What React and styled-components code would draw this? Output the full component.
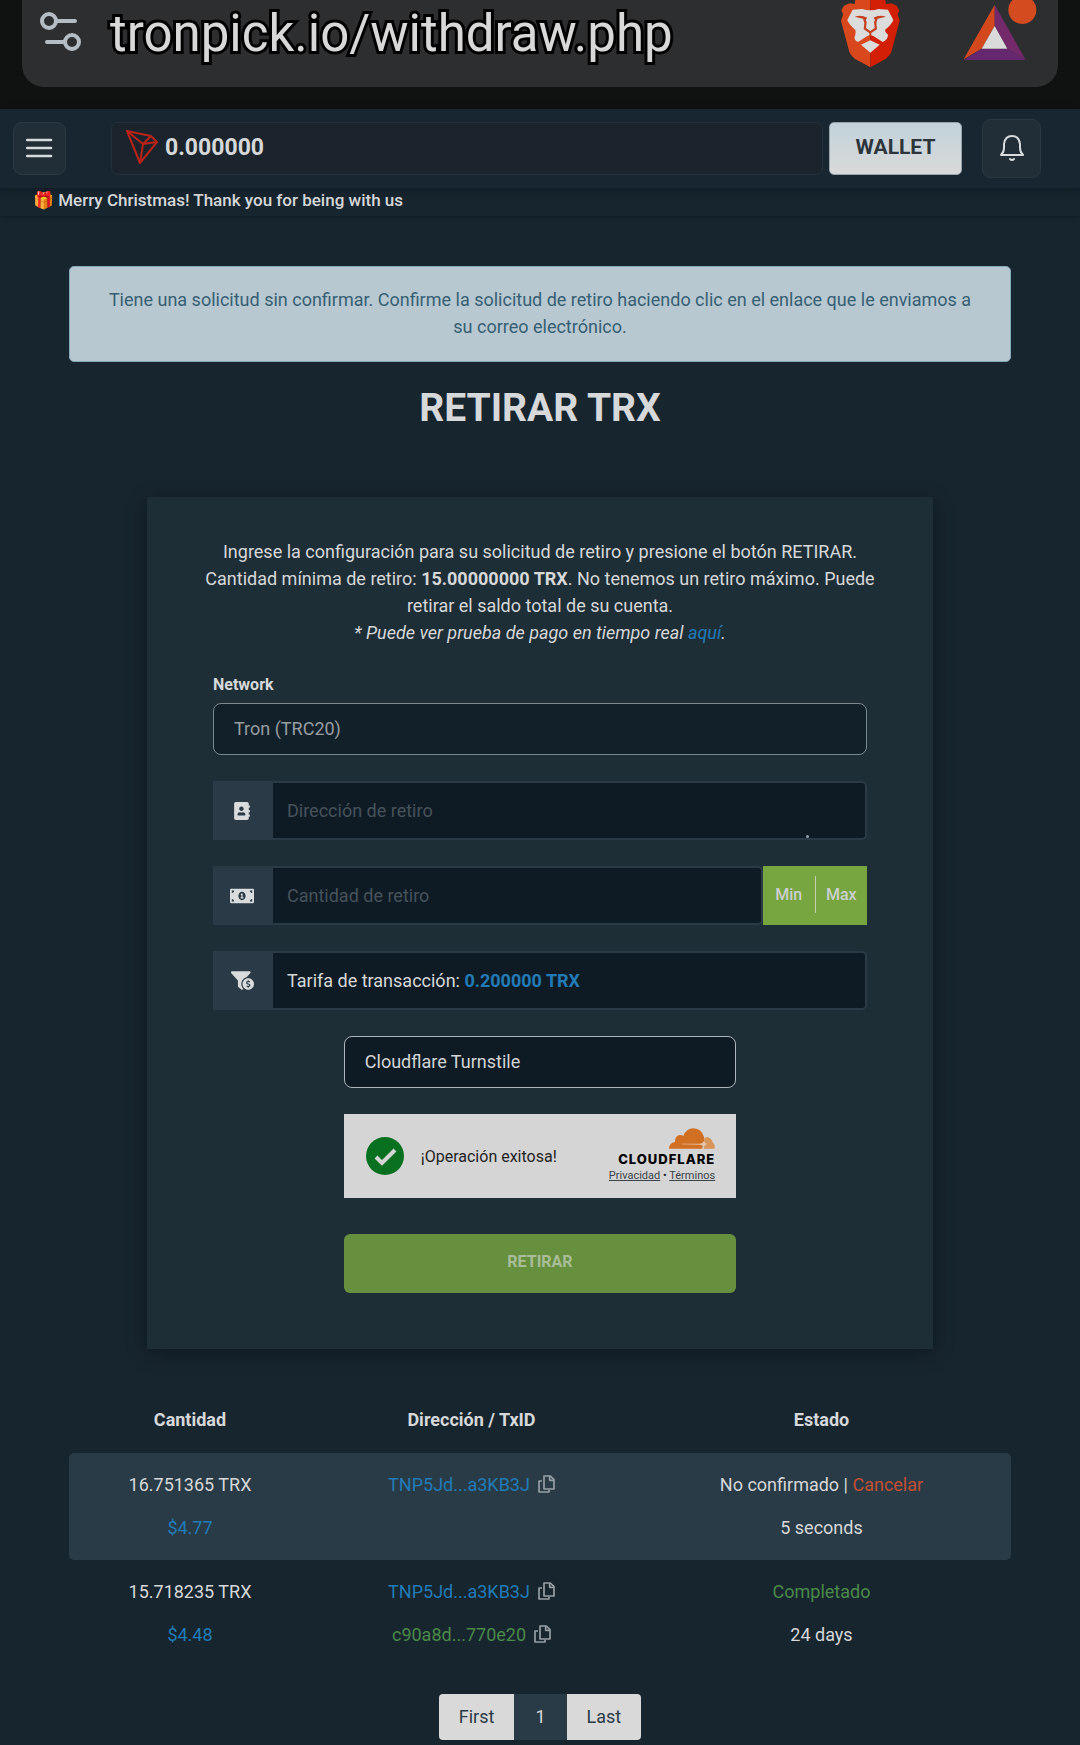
/**
 * External Dependencies
 */
import { useState } from 'react'
import styled, { createGlobalStyle } from 'styled-components'
import { FaAddressBook, FaMoneyBillAlt, FaFunnelDollar } from 'react-icons/fa'

const GlobalStyle = createGlobalStyle`
    *, *::before, *::after {
        box-sizing: border-box;
    }
    body {
        margin: 0;
        background: #17252f;
        color: #d6d8d9;
        font-family: Roboto, "Liberation Sans", sans-serif;
        font-size: 18px;
        line-height: 27px;
    }
    button, input, select, textarea {
        font: inherit;
        color: inherit;
    }
    a {
        text-decoration: none;
    }
`

/**
 * Browser bar
 */
const BrowserBar = styled.div`
    height: 109px;
    padding: 0 22px 22px;
    background: #0f1210;
`

const AddressBar = styled.div`
    display: flex;
    align-items: flex-start;
    height: 87px;
    padding: 0 19px 0 18px;
    border-radius: 0 0 22px 22px;
    background: #2d2e30;
`

const Url = styled.span`
    flex: 1;
    margin-left: 28px;
    font-size: 51px;
    line-height: 68px;
    color: #d8d8d8;
    -webkit-text-stroke: 6px #000;
    paint-order: stroke fill;
    stroke-linejoin: round;
`

const SettingsIcon = styled.svg`
    margin-top: 11px;
`

const BatIcon = styled.svg`
    margin-left: 63px;
`

/**
 * Site header
 */
const Header = styled.header`
    position: relative;
    display: flex;
    align-items: center;
    height: 79px;
    padding: 0 39px 1px 13px;
    background: #182631;
    box-shadow: 0 2px 8px rgba(0, 0, 0, .3);
`

const IconButton = styled.button`
    display: flex;
    align-items: center;
    justify-content: center;
    width: ${props => props.$size}px;
    height: ${props => props.$size}px;
    padding: 0;
    border: 1px solid #2b3942;
    border-radius: 9px;
    background: #212e37;
    color: #d8dadb;
`

const Balance = styled.div`
    display: flex;
    flex: 1;
    align-items: center;
    gap: 7px;
    height: 53px;
    margin: 0 6px 0 45px;
    padding: 0 14px 2px;
    border: 1px solid #22313b;
    border-radius: 7px;
    background: #1b242c;
    font-size: 23px;
    font-weight: 700;
`

const WalletButton = styled.button`
    width: 133px;
    height: 53px;
    margin-right: 20px;
    padding: 0 0 2px;
    border: 1px solid #98a5ad;
    border-radius: 5px;
    background: linear-gradient(#c2d2db, #d9d9d9);
    font-size: 21px;
    font-weight: 700;
    color: #2c343c;
`

const Announcement = styled.div`
    height: 28px;
    padding-left: 33px;
    box-shadow: 0 1px 4px rgba(0, 0, 0, .25);
    font-size: 17px;
    font-weight: 500;
    line-height: 24px;
`

/**
 * Page content
 */
const Main = styled.main`
    padding: 50px 69px 5px;
`

const Alert = styled.div`
    padding: 19px 28px 21px;
    border: 1px solid #84a9b8;
    border-radius: 5px;
    background: #b8c8d0;
    color: #365f74;
    text-align: center;
`

const Title = styled.h1`
    margin: 22px 0 65px;
    font-size: 39px;
    line-height: 48px;
    text-align: center;
`

const Card = styled.section`
    max-width: 786px;
    margin: 0 auto 39px;
    padding: 41px 47px 56px;
    background: #1e2e37;
    box-shadow: 0 4px 18px rgba(0, 0, 0, .35);
`

const Intro = styled.p`
    margin: 0 0 27px;
    text-align: center;
`

const InfoLink = styled.a`
    color: #227bb6;
`

const Form = styled.form`
    display: flex;
    flex-direction: column;
    gap: 26px;
    max-width: 654px;
    margin: 0 auto;
`

const Field = styled.div`
    display: flex;
    flex-direction: column;
    gap: 6px;
`

const Label = styled.label`
    font-size: 16px;
    font-weight: 700;
    line-height: 24px;
`

const Select = styled.select`
    appearance: none;
    width: 100%;
    height: 52px;
    padding: 0 20px 2px;
    border: 1px solid ${props => props.$muted ? '#7f888d' : '#b0b5b8'};
    border-radius: 8px;
    background: ${props => props.$muted ? '#12202a' : '#0e1b25'};
    color: ${props => props.$muted ? '#979da1' : '#d3d5d6'};
    opacity: 1;
`

const InputGroup = styled.div`
    position: relative;
    display: flex;
    height: 59px;
`

const Addon = styled.label`
    display: flex;
    flex: none;
    align-items: center;
    justify-content: center;
    width: 58px;
    background: #2a3a46;
    color: #d9dbdc;
`

const inputBox = `
    flex: 1;
    min-width: 0;
    padding: 14px;
    border: 2px solid #2a3a46;
    border-radius: 0 5px 5px 0;
    background: #0e1b25;
`

const Input = styled.input`
    ${inputBox}
    &::placeholder {
        color: #47525a;
        opacity: 1;
    }
`

const AddressInput = styled.textarea`
    ${inputBox}
    overflow: hidden;
    resize: none;
    &::placeholder {
        color: #47525a;
        opacity: 1;
    }
`

const Grip = styled.span`
    position: absolute;
    right: 58px;
    bottom: 2px;
    width: 3px;
    height: 3px;
    border-radius: 50%;
    background: #9aa3a8;
`

const FeeBox = styled.div`
    ${inputBox}
`

const Fee = styled.strong`
    color: #227bb6;
`

const AmountButtons = styled.div`
    display: flex;
    width: 104px;
    background: #77a540;
`

const AmountButton = styled.button`
    flex: 1;
    padding: 0 0 3px;
    border: 0;
    background: none;
    color: #cbd0cf;
    font-size: 16px;
    font-weight: 500;
`

const AmountDivider = styled.span`
    width: 1px;
    margin: 10px 0 12px;
    background: #c3cfb0;
`

const Verification = styled.div`
    display: flex;
    flex-direction: column;
    gap: 26px;
    width: 60%;
    margin: 0 auto;
`

const Turnstile = styled.div`
    display: flex;
    align-items: center;
    height: 84px;
    padding: 0 21px;
    background: #d5d5d5;
    color: #232323;
    font-size: 16px;
`

const TurnstileText = styled.span`
    flex: 1;
    margin-left: 16px;
`

const CloudflareBrand = styled.div`
    display: flex;
    flex-direction: column;
    align-items: flex-end;
`

const Wordmark = styled.span`
    color: #000;
    font-family: Inter, "Liberation Sans", sans-serif;
    font-size: 13px;
    font-weight: 800;
    letter-spacing: 1px;
    line-height: 18px;
`

const LegalLinks = styled.div`
    font-size: 11px;
    line-height: 16px;
    color: #232323;

    a {
        color: #3a4349;
        text-decoration: underline;
    }
`

const SubmitButton = styled.button`
    height: 59px;
    margin-top: 10px;
    padding: 0 0 5px;
    border: 0;
    border-radius: 6px;
    background: #668f3e;
    color: #aabd99;
    font-size: 16px;
    font-weight: 700;
`

/**
 * Withdrawals table
 */
const Table = styled.table`
    width: 100%;
    border-collapse: separate;
    border-spacing: 0;
    table-layout: fixed;
    text-align: center;
`

const HeadCell = styled.th`
    width: ${props => props.$width};
    padding: 18px 0 20px;
`

const Row = styled.tr`
    td {
        padding: 18px 0 19px;
        vertical-align: top;
        background: ${props => props.$highlight ? '#293b46' : 'transparent'};
    }
    td:first-child {
        border-radius: 5px 0 0 5px;
    }
    td:last-child {
        border-radius: 0 5px 5px 0;
    }
`

const Line = styled.p`
    margin: 0;
    color: ${props => props.$color || 'inherit'};

    & + & {
        margin-top: 16px;
    }
`

const TxLink = styled.a`
    color: ${props => props.$color};
`

const CopyButton = styled.button`
    margin-left: 8px;
    padding: 0;
    border: 0;
    background: none;
    color: #98a0a5;
    line-height: 18px;
    vertical-align: -2px;
`

const Pagination = styled.nav`
    display: flex;
    justify-content: center;
    margin-top: 27px;
`

const PageLink = styled.a`
    padding: 9px ${props => props.$current ? 21 : 20}px 10px;
    background: ${props => props.$current ? '#293b46' : '#d9d9d9'};
    color: ${props => props.$current ? '#d6d8d9' : '#2a3a46'};

    &:first-child {
        border-radius: 4px 0 0 4px;
    }
    &:last-child {
        border-radius: 0 4px 4px 0;
    }
`

const BLUE = '#227bb6'
const GREEN = '#4b8a48'
const RED = '#c24f33'

const withdrawals = [
    {
        amount: '16.751365 TRX',
        usd: '$4.77',
        address: 'TNP5Jd...a3KB3J',
        pending: true,
        age: '5 seconds',
    },
    {
        amount: '15.718235 TRX',
        usd: '$4.48',
        address: 'TNP5Jd...a3KB3J',
        txid: 'c90a8d...770e20',
        age: '24 days',
    },
]

const BraveLogo = () => (
    <svg width="60" height="68" viewBox="0 0 180 204" aria-label="Brave">
        <path d="M46 0L44 12L28 10L12 17L4 31L9 43L3 62L28 156Q32 167 44 176L91 202V0Z" fill="#d8481c" />
        <path d="M136 0L138 12L154 10L170 17L178 31L173 43L179 62L154 156Q150 167 138 176L91 202V0Z" fill="#d21f06" />
        <path d="M38 29L66 27Q91 35 116 27L144 29L160 60Q156 72 135 90Q134 97 144 104Q144 119 128 126L100 108L91 105L82 108L54 126Q38 119 46 104Q48 97 46 90Q26 72 22 60Z" fill="#dcdcdc" />
        <path d="M44 50Q64 44 82 53L77 60L80 66L78 84L91 93L104 84L102 66L105 60L100 53Q118 44 138 50L113 56L109 68L111 88L94 99V108H88V99L71 88L73 68L69 56Z" fill="#c6401f" />
        <path d="M81 50H101V64L98 84L91 89L84 84L81 64Z" fill="#dcdcdc" />
        <path d="M63 134L91 121L119 134L91 158Z" fill="#dcdcdc" />
    </svg>
)

const TronLogo = () => (
    <svg width="32" height="35" viewBox="0 0 32 35" fill="none" stroke="#b92318" strokeWidth="2" strokeLinejoin="round" aria-hidden="true">
        <path d="M1 1L25 6L31 12L14 33Z" />
        <path d="M1 1L17 14L25 6M17 14L31 12M17 14L14 33" />
    </svg>
)

const CloudflareLogo = () => (
    <svg width="46" height="22" viewBox="0 0 138 66" aria-hidden="true">
        <path d="M104 62Q108 50 106 30Q116 25 125 32Q130 37 131 43Q138 49 137 62Z" fill="#d99457" />
        <path d="M0 62Q1 44 18 42Q17 24 32 21Q38 20 43 24Q52 1 73 1Q98 2 105 27Q108 44 99 62Z" fill="#d17023" />
        <path d="M38 47L94 47Q101 47 104 40Q108 47 114 48Q107 52 104 59Q102 52 94 50L38 49Z" fill="#e2c7ac" />
    </svg>
)

const CopyAction = () => (
    <CopyButton type="button" aria-label="Copiar">
        <svg width="17" height="18" viewBox="0 0 51 54" fill="none" stroke="currentColor" strokeWidth="5" strokeLinejoin="round" aria-hidden="true">
            <path d="M18 3H37L48 14V42H18Z" />
            <path d="M35 3V16H48" />
            <path d="M12 18H3V51H33V44" />
        </svg>
    </CopyButton>
)

const WithdrawalRow = ( {withdrawal} ) => {
    const {amount, usd, address, txid, pending, age} = withdrawal

    return (
        <Row $highlight={pending}>
            <td>
                <Line>{amount}</Line>
                <Line $color={BLUE}>{usd}</Line>
            </td>
            <td>
                <Line><TxLink href="#address" $color={BLUE}>{address}</TxLink><CopyAction /></Line>
                { txid && <Line><TxLink href="#tx" $color={GREEN}>{txid}</TxLink><CopyAction /></Line> }
            </td>
            <td>
                { pending
                    ? <Line>No confirmado | <TxLink href="#cancel" $color={RED}>Cancelar</TxLink></Line>
                    : <Line $color={GREEN}>Completado</Line> }
                <Line>{age}</Line>
            </td>
        </Row>
    )
}

const WithdrawForm = () => {
    const [ address, setAddress ] = useState('')
    const [ amount, setAmount ] = useState('')

    return (
        <Form onSubmit={e => e.preventDefault()}>
            <Field>
                <Label htmlFor="network">Network</Label>
                <Select id="network" $muted disabled>
                    <option>Tron (TRC20)</option>
                </Select>
            </Field>
            <InputGroup>
                <Addon htmlFor="address" aria-label="Dirección de retiro"><FaAddressBook size={18} /></Addon>
                <AddressInput id="address" rows="1" placeholder="Dirección de retiro" value={address} onChange={e => setAddress(e.target.value)} />
                <Grip />
            </InputGroup>
            <InputGroup>
                <Addon htmlFor="amount" aria-label="Cantidad de retiro"><FaMoneyBillAlt size={24} /></Addon>
                <Input id="amount" placeholder="Cantidad de retiro" value={amount} onChange={e => setAmount(e.target.value)} />
                <AmountButtons>
                    <AmountButton type="button" onClick={() => setAmount('15.00000000')}>Min</AmountButton>
                    <AmountDivider />
                    <AmountButton type="button" onClick={() => setAmount('0.000000')}>Max</AmountButton>
                </AmountButtons>
            </InputGroup>
            <InputGroup>
                <Addon as="span"><FaFunnelDollar size={23} /></Addon>
                <FeeBox>Tarifa de transacción: <Fee>0.200000 TRX</Fee></FeeBox>
            </InputGroup>
            <Verification>
                <Select aria-label="Captcha">
                    <option>Cloudflare Turnstile</option>
                </Select>
                <Turnstile>
                    <svg width="40" height="40" viewBox="0 0 40 40" aria-hidden="true">
                        <circle cx="20" cy="20" r="19" fill="#08701f" />
                        <path d="M11 21L17 27L30 14" fill="none" stroke="#d5d5d5" strokeWidth="4" />
                    </svg>
                    <TurnstileText>¡Operación exitosa!</TurnstileText>
                    <CloudflareBrand>
                        <CloudflareLogo />
                        <Wordmark>CLOUDFLARE</Wordmark>
                        <LegalLinks><a href="#privacy">Privacidad</a> • <a href="#terms">Términos</a></LegalLinks>
                    </CloudflareBrand>
                </Turnstile>
                <SubmitButton type="submit">RETIRAR</SubmitButton>
            </Verification>
        </Form>
    )
}

const App = () => {
    return (
        <>
            <GlobalStyle />
            <BrowserBar>
                <AddressBar>
                    <SettingsIcon width="42" height="42" viewBox="0 0 42 42" fill="none" stroke="#b4bcc4" strokeWidth="4" strokeLinecap="round" aria-hidden="true">
                        <circle cx="9" cy="10" r="7" />
                        <path d="M18 10H35M7 31H24" />
                        <circle cx="32" cy="31" r="7" />
                    </SettingsIcon>
                    <Url>tronpick.io/withdraw.php</Url>
                    <BraveLogo />
                    <BatIcon width="76" height="68" viewBox="0 0 228 204" aria-hidden="true">
                        <path d="M95 14V78L56 146L2 178Z" fill="#d4481d" />
                        <path d="M95 14L188 180L133 146L95 78Z" fill="#742a6a" />
                        <path d="M2 180L56 146H133L188 180Z" fill="#65276f" />
                        <path d="M95 78L133 146H56Z" fill="#dadada" />
                        <circle cx="178" cy="30" r="42" fill="#d44b20" />
                    </BatIcon>
                </AddressBar>
            </BrowserBar>
            <Header>
                <IconButton $size={53} type="button" aria-label="Menu">
                    <svg width="27" height="20" viewBox="0 0 27 20" stroke="currentColor" strokeWidth="2.5" strokeLinecap="round" aria-hidden="true">
                        <path d="M1 2H25M1 10H25M1 18H25" />
                    </svg>
                </IconButton>
                <Balance><TronLogo />0.000000</Balance>
                <WalletButton type="button">WALLET</WalletButton>
                <IconButton $size={59} type="button" aria-label="Notifications">
                    <svg width="26" height="28" viewBox="0 0 26 28" fill="none" stroke="currentColor" strokeWidth="2" strokeLinecap="round" strokeLinejoin="round" aria-hidden="true">
                        <path d="M2 21Q5 18 5 14V10Q6 2 13 2Q20 2 21 10V14Q21 18 24 21Z" />
                        <path d="M11 25Q13 27 15 25" />
                    </svg>
                </IconButton>
            </Header>
            <Announcement>🎁 Merry Christmas! Thank you for being with us</Announcement>
            <Main>
                <Alert role="alert">
                    Tiene una solicitud sin confirmar. Confirme la solicitud de retiro haciendo clic en el enlace que le enviamos a su correo electrónico.
                </Alert>
                <Title>RETIRAR TRX</Title>
                <Card>
                    <Intro>
                        Ingrese la configuración para su solicitud de retiro y presione el botón RETIRAR.<br />
                        Cantidad mínima de retiro: <strong>15.00000000 TRX</strong>. No tenemos un retiro máximo. Puede retirar el saldo total de su cuenta.<br />
                        <em>* Puede ver prueba de pago en tiempo real <InfoLink href="#payments">aquí</InfoLink>.</em>
                    </Intro>
                    <WithdrawForm />
                </Card>
                <Table>
                    <thead>
                        <tr>
                            <HeadCell $width="242px">Cantidad</HeadCell>
                            <HeadCell $width="321px">Dirección / TxID</HeadCell>
                            <HeadCell $width="auto">Estado</HeadCell>
                        </tr>
                    </thead>
                    <tbody>
                        { withdrawals.map( withdrawal => <WithdrawalRow key={withdrawal.amount} withdrawal={withdrawal} /> ) }
                    </tbody>
                </Table>
                <Pagination aria-label="Pagination">
                    <PageLink href="#first">First</PageLink>
                    <PageLink href="#1" $current aria-current="page">1</PageLink>
                    <PageLink href="#last">Last</PageLink>
                </Pagination>
            </Main>
        </>
    )
}

export default App
